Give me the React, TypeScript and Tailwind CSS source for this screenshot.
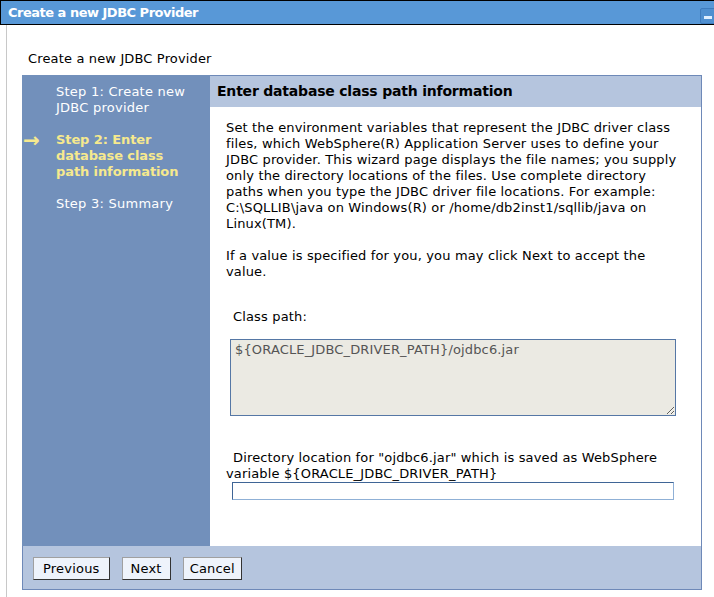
import React from "react";

const font = { fontFamily: '"DejaVu Sans", Verdana, sans-serif' };

export default function App() {
  return (
    <div className="w-[714px] h-[597px] bg-white overflow-hidden text-[13px] text-black" style={font}>
      {/* Title bar */}
      <div className="relative h-[25px] bg-[#5898d7] border-t border-b border-l border-black flex items-center pl-[7px]">
        <span className="text-white font-bold text-[13px] tracking-[-0.5px]">Create a new JDBC Provider</span>
        <div className="absolute right-[-2px] top-[7px] w-[16px] h-[16px] rounded-[2px] bg-[#4f8fd0] border border-[#3f7cbd] flex items-center justify-center">
          <div className="w-[8px] h-[3px] bg-[#dfeeff] mt-[3px]" />
        </div>
      </div>

      {/* Page body */}
      <div className="ml-[6px] border-l border-[#c8c8c8] h-[572px] pl-[15px] tracking-[0.15px]">
        <div className="pt-[26px] pl-[6px] leading-[16px]">Create a new JDBC Provider</div>

        <div className="mt-[8px] w-[680px]">
          <div className="flex">
            {/* Steps */}
            <div className="w-[188px] bg-[#7290bb] pt-[9px] leading-[16px] text-white tracking-[0.25px]">
              <div className="flex mb-[16px]">
                <div className="w-[34px]" />
                <div>Step 1: Create new<br />JDBC provider</div>
              </div>
              <div className="flex mb-[16px] text-[#f6e98e] font-bold">
                <div className="w-[34px] pl-[1px] text-[20px] leading-[16px]">→</div>
                <div className="tracking-[-0.1px]">Step 2: Enter<br />database class<br />path information</div>
              </div>
              <div className="flex">
                <div className="w-[34px]" />
                <div>Step 3: Summary</div>
              </div>
            </div>

            {/* Content */}
            <div className="w-[492px] border-r border-[#6e89b8] flex flex-col">
              <div className="h-[32px] bg-[#b5c5de] border-t border-[#6e89b8] flex items-center pl-[7px] font-bold text-[14px] tracking-[-0.2px]">
                Enter database class path information
              </div>
              <div className="h-[439px] bg-white pl-[16px] pt-[13px] leading-[16px]">
                <p className="whitespace-nowrap">
                  Set the environment variables that represent the JDBC driver class<br />
                  files, which WebSphere(R) Application Server uses to define your<br />
                  JDBC provider. This wizard page displays the file names; you supply<br />
                  only the directory locations of the files. Use complete directory<br />
                  paths when you type the JDBC driver file locations. For example:<br />
                  C:\SQLLIB\java on Windows(R) or /home/db2inst1/sqllib/java on<br />
                  Linux(TM).
                </p>
                <p className="mt-[16px] whitespace-nowrap">
                  If a value is specified for you, you may click Next to accept the<br />
                  value.
                </p>
                <div className="mt-[29px] ml-[7px]">Class path:</div>
                <textarea
                  readOnly
                  value="${ORACLE_JDBC_DRIVER_PATH}/ojdbc6.jar"
                  className="block mt-[14px] ml-[4px] w-[446px] h-[77px] bg-[#ebeae3] border border-[#5577a5] text-[#555] px-[4px] py-[2px] leading-[16px] text-[13px] tracking-[0.15px] outline-none"
                  style={font}
                />
                <div className="mt-[34px] whitespace-nowrap">
                  <span className="pl-[7px]">Directory location for "ojdbc6.jar" which is saved as WebSphere</span>
                  <br />
                  variable ${"{ORACLE_JDBC_DRIVER_PATH}"}
                </div>
                <input
                  type="text"
                  className="block ml-[6px] w-[442px] h-[18px] bg-white border border-[#3f6596] border-r-[#8fb0d6] border-b-[#8fb0d6] outline-none"
                />
              </div>
            </div>
          </div>

          {/* Footer */}
          <div className="h-[44px] bg-[#b5c5de] border-l border-r border-b border-[#6e89b8] flex items-start pt-[11px] pl-[10px] gap-[12px]">
            <button className="h-[23px] px-[9px] bg-[#eef3fb] border border-[#333] border-t-[#a0a0a0] border-l-[#a0a0a0] leading-[18px] tracking-[0.2px]" style={font}>
              Previous
            </button>
            <button className="h-[23px] px-[8px] bg-[#eef3fb] border border-[#333] border-t-[#a0a0a0] border-l-[#a0a0a0] leading-[18px] tracking-[0.2px]" style={font}>
              Next
            </button>
            <button className="h-[23px] px-[6px] bg-[#eef3fb] border border-[#333] border-t-[#a0a0a0] border-l-[#a0a0a0] leading-[18px] tracking-[0.2px]" style={font}>
              Cancel
            </button>
          </div>
        </div>
      </div>
    </div>
  );
}
